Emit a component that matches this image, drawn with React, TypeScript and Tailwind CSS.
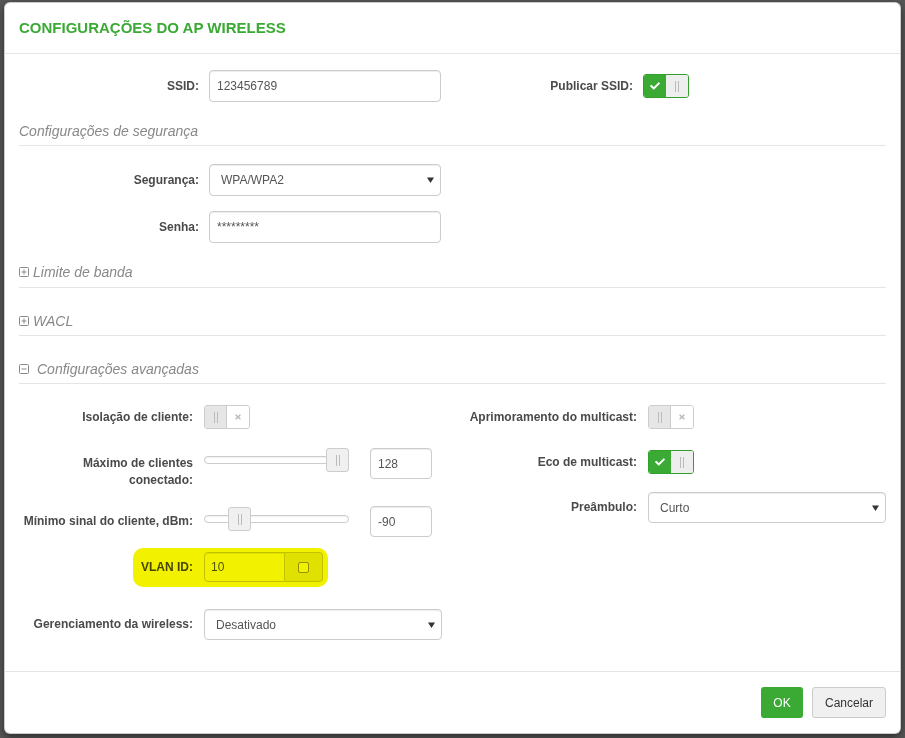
import { FaCheck, FaTimes } from 'react-icons/fa';

const label = 'text-right text-[12px] font-bold leading-[17px] text-[#4a4a4a]';
const box =
  'flex items-center rounded-[4px] border border-[#ccc] bg-white text-[12px] text-[#555] shadow-[inset_0_1px_1px_rgba(0,0,0,0.075)]';

function Grip() {
  return (
    <div className="flex gap-[2px]">
      <span className="h-[11px] w-px bg-[#bbb]" />
      <span className="h-[11px] w-px bg-[#bbb]" />
    </div>
  );
}

function Toggle({ on }: { on: boolean }) {
  if (on) {
    return (
      <div className="flex h-[24px] w-[46px] overflow-hidden rounded-[3px] border border-[#33a02e]">
        <div className="flex w-[22px] items-center justify-center bg-[#3aaa35]">
          <FaCheck className="text-white" size={10} />
        </div>
        <div className="flex flex-1 items-center justify-center bg-[#eee]">
          <Grip />
        </div>
      </div>
    );
  }
  return (
    <div className="flex h-[24px] w-[46px] overflow-hidden rounded-[3px] border border-[#ccc]">
      <div className="flex w-[22px] items-center justify-center border-r border-[#ccc] bg-[#e6e6e6]">
        <Grip />
      </div>
      <div className="flex flex-1 items-center justify-center bg-white">
        <FaTimes className="text-[#bbb]" size={8} />
      </div>
    </div>
  );
}

function Caret() {
  return (
    <svg width="7" height="6" viewBox="0 0 7 6" className="mr-[6px] shrink-0">
      <path d="M0 0.5h7L3.5 6z" fill="#333" />
    </svg>
  );
}

function Select({ value, width }: { value: string; width: string }) {
  return (
    <div className={`${box} ${width} h-[32px] justify-between pl-[11px]`}>
      <span>{value}</span>
      <Caret />
    </div>
  );
}

function Slider({ value, min, max }: { value: number; min: number; max: number }) {
  const left = ((value - min) / (max - min)) * 122;
  return (
    <div className="relative h-[24px] w-[145px]">
      <div className="absolute left-0 right-0 top-[8px] h-[8px] rounded-full border border-[#ccc] bg-white shadow-[inset_0_1px_1px_rgba(0,0,0,0.06)]" />
      <div
        className="absolute top-0 flex h-[24px] w-[23px] items-center justify-center rounded-[3px] border border-[#ccc] bg-[#f0f0f0]"
        style={{ left }}
      >
        <Grip />
      </div>
    </div>
  );
}

function Section({ title, icon, pb = 'pb-[5px]', mt }: { title: string; icon?: 'plus' | 'minus'; pb?: string; mt: string }) {
  return (
    <div className={`${mt} flex items-center border-b border-[#e5e5e5] ${pb}`}>
      {icon && (
        <svg width="10" height="10" viewBox="0 0 10 10" className={icon === 'minus' ? 'mr-[8px]' : 'mr-[4px]'}>
          <rect x="0.5" y="0.5" width="9" height="9" rx="1" fill="none" stroke="#888" />
          <path d="M2.5 5h5" stroke="#888" />
          {icon === 'plus' && <path d="M5 2.5v5" stroke="#888" />}
        </svg>
      )}
      <span className="text-[14px] italic leading-[18px] text-[#888]">{title}</span>
    </div>
  );
}

export default function App() {
  return (
    <div className="h-[738px] overflow-hidden bg-[#575757] pl-[4px] pt-[2px] font-['Liberation_Sans',Arial,sans-serif]">
      <div className="w-[897px] rounded-[6px] border border-black/20 bg-white shadow-[0_3px_9px_rgba(0,0,0,0.5)]">
        <div className="flex h-[51px] items-center border-b border-[#e5e5e5] px-[14px]">
          <h4 className="text-[15px] font-bold text-[#3aaa35]">CONFIGURAÇÕES DO AP WIRELESS</h4>
        </div>

        <div className="px-[14px] pb-[31px] pt-[16px]">
          <div className="flex h-[32px] items-center">
            <div className="flex w-[433px] items-center">
              <div className={`${label} w-[180px]`}>SSID:</div>
              <input
                defaultValue="123456789"
                className={`${box} ml-[10px] h-[32px] w-[232px] px-[7px] outline-none`}
              />
            </div>
            <div className="flex items-center">
              <div className={`${label} w-[181px]`}>Publicar SSID:</div>
              <div className="ml-[10px]">
                <Toggle on />
              </div>
            </div>
          </div>

          <Section mt="mt-[20px]" title="Configurações de segurança" />

          <div className="mt-[18px] flex h-[32px] items-center">
            <div className={`${label} w-[180px]`}>Segurança:</div>
            <div className="ml-[10px]">
              <Select value="WPA/WPA2" width="w-[232px]" />
            </div>
          </div>
          <div className="mt-[15px] flex h-[32px] items-center">
            <div className={`${label} w-[180px]`}>Senha:</div>
            <input
              defaultValue="*********"
              className={`${box} ml-[10px] h-[32px] w-[232px] px-[7px] text-[10px] outline-none`}
            />
          </div>

          <Section mt="mt-[20px]" pb="pb-[6px]" icon="plus" title="Limite de banda" />
          <Section mt="mt-[24px]" icon="plus" title="WACL" />
          <Section mt="mt-[24px]" icon="minus" title="Configurações avançadas" />

          <div className="mt-[21px] flex">
            <div className="flex w-[444px] flex-col">
              <div className="flex h-[24px] items-center">
                <div className={`${label} w-[174px]`}>Isolação de cliente:</div>
                <div className="ml-[11px]">
                  <Toggle on={false} />
                </div>
              </div>

              <div className="mt-[19px] flex h-[41px] items-start">
                <div className={`${label} w-[174px] pt-[7px]`}>
                  Máximo de clientes
                  <br />
                  conectado:
                </div>
                <div className="ml-[11px]">
                  <Slider value={128} min={1} max={128} />
                </div>
                <input defaultValue="128" className={`${box} ml-[21px] h-[31px] w-[62px] px-[7px] outline-none`} />
              </div>

              <div className="mt-[17px] flex h-[31px] items-center">
                <div className={`${label} w-[174px]`}>Mínimo sinal do cliente, dBm:</div>
                <div className="ml-[11px] self-start pt-[1px]">
                  <Slider value={-90} min={-95} max={-70} />
                </div>
                <input defaultValue="-90" className={`${box} ml-[21px] h-[31px] w-[62px] px-[7px] outline-none`} />
              </div>

              <div className="relative mt-[15px] flex h-[30px] items-center">
                <div className={`${label} w-[174px]`}>VLAN ID:</div>
                <div className="ml-[11px] flex h-[30px] w-[119px]">
                  <input
                    defaultValue="10"
                    className={`${box} h-[30px] w-[81px] rounded-r-none px-[6px] outline-none`}
                  />
                  <div className="flex flex-1 items-center justify-center rounded-r-[4px] border border-l-0 border-[#ccc] bg-[#eee]">
                    <span className="h-[11px] w-[11px] rounded-[2px] border border-[#999] bg-white" />
                  </div>
                </div>
                <div className="pointer-events-none absolute left-[114px] top-[-4px] h-[39px] w-[195px] rounded-[10px] bg-[#f2f200] mix-blend-multiply" />
              </div>

              <div className="mt-[27px] flex h-[31px] items-center">
                <div className={`${label} w-[174px]`}>Gerenciamento da wireless:</div>
                <div className="ml-[11px]">
                  <Select value="Desativado" width="w-[238px] !h-[31px]" />
                </div>
              </div>
            </div>

            <div className="flex flex-1 flex-col">
              <div className="flex h-[24px] items-center">
                <div className={`${label} w-[174px]`}>Aprimoramento do multicast:</div>
                <div className="ml-[11px]">
                  <Toggle on={false} />
                </div>
              </div>
              <div className="mt-[21px] flex h-[24px] items-center">
                <div className={`${label} w-[174px]`}>Eco de multicast:</div>
                <div className="ml-[11px]">
                  <Toggle on />
                </div>
              </div>
              <div className="mt-[18px] flex h-[31px] items-center">
                <div className={`${label} w-[174px]`}>Preâmbulo:</div>
                <div className="ml-[11px]">
                  <Select value="Curto" width="w-[238px] !h-[31px]" />
                </div>
              </div>
            </div>
          </div>
        </div>

        <div className="flex justify-end gap-[9px] border-t border-[#e5e5e5] px-[14px] py-[15px]">
          <button className="h-[31px] w-[42px] rounded-[3px] bg-[#3aaa35] text-[12px] text-white">OK</button>
          <button className="h-[31px] w-[74px] rounded-[3px] border border-[#ccc] bg-[#f0f0f0] text-[12px] text-[#333]">
            Cancelar
          </button>
        </div>
      </div>
    </div>
  );
}
